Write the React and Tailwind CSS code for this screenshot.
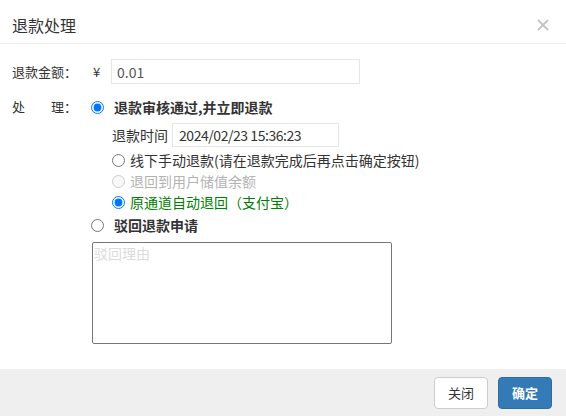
import { useState } from 'react'

const font = { fontFamily: '"Noto Sans CJK SC", "Microsoft YaHei", sans-serif' }

function CloseIcon() {
  return (
    <svg width="12" height="12" viewBox="0 0 12 12" fill="none" stroke="#c4c4c4" strokeWidth="1.8" strokeLinecap="round">
      <line x1="1.5" y1="1.5" x2="10.5" y2="10.5" />
      <line x1="10.5" y1="1.5" x2="1.5" y2="10.5" />
    </svg>
  )
}

export default function App() {
  const [action, setAction] = useState('approve')
  const [method, setMethod] = useState('origin')

  return (
    <div className="flex h-[416px] w-[566px] flex-col bg-white text-[13px] text-[#333]" style={font}>
      <div className="flex h-[44px] items-start justify-between border-b border-[#ececec] pl-3 pr-[17px] pt-[15px]">
        <h3 className="text-[16px] leading-[20px] font-normal text-[#333]">退款处理</h3>
        <button className="mt-[4px]"><CloseIcon /></button>
      </div>

      <div className="flex-1 pl-3">
        <div className="mt-[15px] flex h-[25px] items-center">
          <span className="w-[79px] leading-[25px]">退款金额：</span>
          <span className="w-[20px] pl-[2px] text-[#333]">¥</span>
          <input
            className="h-[25px] w-[249px] border border-[#e6e6e6] px-[5px] text-[14px] text-[#555] outline-none"
            defaultValue="0.01"
          />
        </div>

        <div className="mt-[13px] flex">
          <span className="flex h-[20px] w-[79px] items-center">
            <span className="flex w-[52px] justify-between"><span>处</span><span>理</span></span>
            <span>：</span>
          </span>
          <div className="flex flex-col">
            <label className="flex h-[20px] items-center font-bold text-[14px]">
              <input type="radio" name="act" className="m-0 h-[13px] w-[13px] accent-[#0075ff]" checked={action === 'approve'} onChange={() => setAction('approve')} />
              <span className="ml-[10px]">退款审核通过,并立即退款</span>
            </label>

            <div className="ml-[21px] flex flex-col">
              <div className="mt-[6px] flex h-[24px] items-center text-[14px]">
                <span className="w-[60px]">退款时间</span>
                <input
                  className="h-[24px] w-[167px] border border-[#e6e6e6] px-[6px] text-[14px] tracking-[-0.45px] text-[#333] outline-none"
                  defaultValue="2024/02/23 15:36:23"
                />
              </div>
              <label className="mt-[3px] flex h-[21px] items-center text-[14px]">
                <input type="radio" name="m" className="m-0 h-[13px] w-[13px] accent-[#0075ff]" checked={method === 'offline'} onChange={() => setMethod('offline')} />
                <span className="ml-[5px]">线下手动退款(请在退款完成后再点击确定按钮)</span>
              </label>
              <label className="flex h-[21px] items-center text-[14px] text-[#b3b3b3]">
                <input type="radio" name="m" disabled className="m-0 h-[13px] w-[13px]" />
                <span className="ml-[5px]">退回到用户储值余额</span>
              </label>
              <label className="flex h-[21px] items-center text-[14px] text-[#008000]">
                <input type="radio" name="m" className="m-0 h-[13px] w-[13px] accent-[#0075ff]" checked={method === 'origin'} onChange={() => setMethod('origin')} />
                <span className="ml-[5px]">原通道自动退回（支付宝）</span>
              </label>
            </div>

            <label className="mt-[2px] flex h-[21px] items-center font-bold text-[14px]">
              <input type="radio" name="act" className="m-0 h-[13px] w-[13px] accent-[#0075ff]" checked={action === 'reject'} onChange={() => setAction('reject')} />
              <span className="ml-[10px]">驳回退款申请</span>
            </label>

            <textarea
              className="ml-[1px] mt-[6px] h-[102px] w-[300px] resize-none rounded-[2px] border border-[#767676] px-[1px] py-0 text-[14px] leading-[20px] outline-none placeholder:text-[#dcdcdc]"
              placeholder="驳回理由"
            />
          </div>
        </div>
      </div>

      <div className="flex h-[47px] items-center justify-end gap-[10px] bg-[#efefef] pr-[14px]">
        <button className="h-[32px] w-[54px] rounded-[4px] border border-[#ccc] bg-white text-[13px] text-[#333]">关闭</button>
        <button className="h-[32px] w-[54px] rounded-[4px] border border-[#2e6da4] bg-[#337ab7] text-[13px] font-bold text-white">确定</button>
      </div>
    </div>
  )
}
